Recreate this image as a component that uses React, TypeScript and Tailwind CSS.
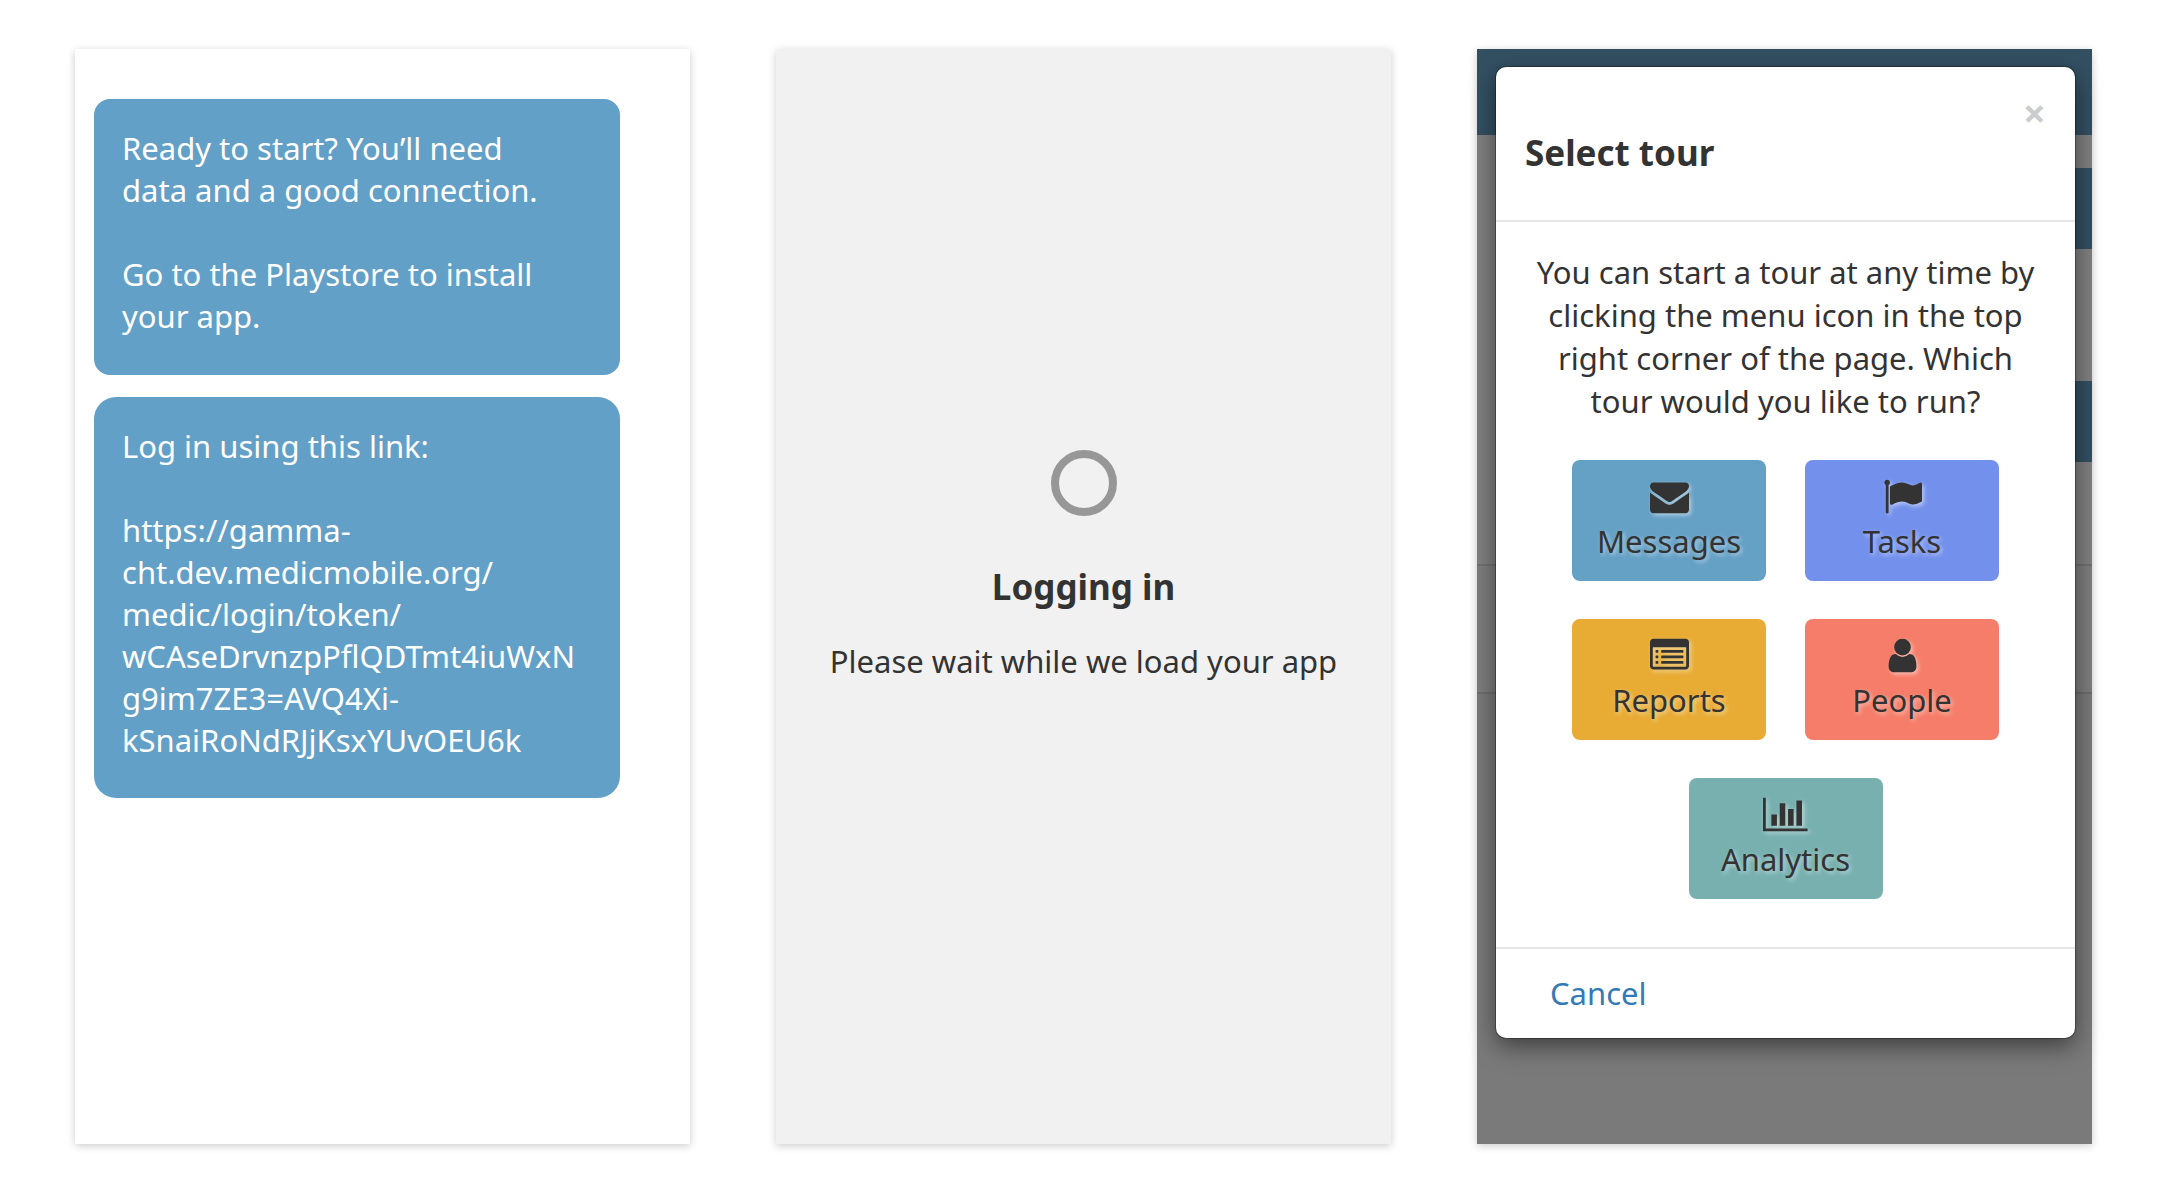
import type { ReactNode } from "react";

type IconName = "envelope" | "flag" | "list" | "user" | "chart";

const icons: Record<IconName, { width: number; path: string }> = {
  envelope: {
    width: 1792,
    path: "M1792 710v794q0 66-47 113t-113 47h-1472q-66 0-113-47t-47-113v-794q44 49 101 87 362 246 497 345 57 42 92.5 65.5t94.5 48 110 24.5h2q51 0 110-24.5t94.5-48 92.5-65.5q170-123 498-345 57-39 100-87zm0-294q0 79-49 151t-122 123q-376 261-468 325-10 7-42.5 31t-54 38.5-52 32.5-57.5 27-50 9h-2q-23 0-50-9t-57.5-27-52-32.5-54-38.5-42.5-31q-91-64-262-182.5t-205-142.5q-62-42-117-115.5t-55-136.5q0-78 41.5-130t118.5-52h1472q65 0 112.5 47t47.5 113z",
  },
  flag: {
    width: 1792,
    path: "M320 256q0 72-64 110v1266q0 13-9.5 22.5t-22.5 9.5h-64q-13 0-22.5-9.5t-9.5-22.5v-1266q-64-38-64-110 0-53 37.5-90.5t90.5-37.5 90.5 37.5 37.5 90.5zm1472 64v763q0 25-12.5 38.5t-39.5 27.5q-215 116-369 116-61 0-123.5-22t-108.5-48-115.5-48-142.5-22q-192 0-464 146-17 9-33 9-26 0-45-19t-19-45v-742q0-32 31-55 21-14 79-43 236-120 421-120 107 0 200 29t219 88q38 19 88 19 54 0 117.5-21t110-47 88-47 54.5-21q26 0 45 19t19 45z",
  },
  list: {
    width: 1792,
    path: "M384 1184v64q0 13-9.5 22.5t-22.5 9.5h-64q-13 0-22.5-9.5t-9.5-22.5v-64q0-13 9.5-22.5t22.5-9.5h64q13 0 22.5 9.5t9.5 22.5zm0-256v64q0 13-9.5 22.5t-22.5 9.5h-64q-13 0-22.5-9.5t-9.5-22.5v-64q0-13 9.5-22.5t22.5-9.5h64q13 0 22.5 9.5t9.5 22.5zm0-256v64q0 13-9.5 22.5t-22.5 9.5h-64q-13 0-22.5-9.5t-9.5-22.5v-64q0-13 9.5-22.5t22.5-9.5h64q13 0 22.5 9.5t9.5 22.5zm1152 512v64q0 13-9.5 22.5t-22.5 9.5h-960q-13 0-22.5-9.5t-9.5-22.5v-64q0-13 9.5-22.5t22.5-9.5h960q13 0 22.5 9.5t9.5 22.5zm0-256v64q0 13-9.5 22.5t-22.5 9.5h-960q-13 0-22.5-9.5t-9.5-22.5v-64q0-13 9.5-22.5t22.5-9.5h960q13 0 22.5 9.5t9.5 22.5zm0-256v64q0 13-9.5 22.5t-22.5 9.5h-960q-13 0-22.5-9.5t-9.5-22.5v-64q0-13 9.5-22.5t22.5-9.5h960q13 0 22.5 9.5t9.5 22.5zm128 704v-832q0-13-9.5-22.5t-22.5-9.5h-1472q-13 0-22.5 9.5t-9.5 22.5v832q0 13 9.5 22.5t22.5 9.5h1472q13 0 22.5-9.5t9.5-22.5zm128-1088v1088q0 66-47 113t-113 47h-1472q-66 0-113-47t-47-113v-1088q0-66 47-113t113-47h1472q66 0 113 47t47 113z",
  },
  user: {
    width: 1792,
    path: "M1536 1399q0 109-62.5 187t-150.5 78h-854q-88 0-150.5-78t-62.5-187q0-85 8.5-160.5t31.5-152 58.5-131 94-89 134.5-34.5q131 128 313 128t313-128q76 0 134.5 34.5t94 89 58.5 131 31.5 152 8.5 160.5zm-256-887q0 159-112.5 271.5t-271.5 112.5-271.5-112.5-112.5-271.5 112.5-271.5 271.5-112.5 271.5 112.5 112.5 271.5z",
  },
  chart: {
    width: 2048,
    path: "M640 896v512h-256v-512h256zm384-512v1024h-256v-1024h256zm1024 1152v128h-2048v-1536h128v1408h1920zm-640-896v768h-256v-768h256zm384-384v1152h-256v-1152h256z",
  },
};

function Icon({ name }: { name: IconName }) {
  const { width, path } = icons[name];
  return (
    <svg
      viewBox={`0 0 ${width} 1792`}
      className="h-[39px] w-auto overflow-visible fill-current drop-shadow-[2px_2px_2px_rgba(255,255,255,0.5)]"
      aria-hidden="true"
    >
      <path d={path} />
    </svg>
  );
}

function Tile({ icon, label, color }: { icon: IconName; label: string; color: string }) {
  return (
    <button
      type="button"
      className={`flex w-[194px] flex-col items-center rounded-lg pt-[17px] pb-[14px] text-[31px] leading-[51px] text-[#333] [text-shadow:2px_2px_4px_rgba(255,255,255,0.5)] ${color}`}
    >
      <Icon name={icon} />
      {label}
    </button>
  );
}

function Screen({ label, className, children }: { label: string; className: string; children: ReactNode }) {
  return (
    <section aria-label={label} className={`min-w-0 shadow-[0_2px_8px_rgba(0,0,0,0.2)] ${className}`}>
      {children}
    </section>
  );
}

function MessagesScreen() {
  return (
    <Screen label="Text messages" className="bg-white pt-[50px] pr-[70px] pl-[19px] text-[31px] text-white">
      <div className="rounded-2xl bg-[#63a0c7] px-7 pt-7 pb-[38px] leading-[42px]">
        <p>
          Ready to start? You’ll need
          <br />
          data and a good connection.
        </p>
        <p className="mt-[42px]">
          Go to the Playstore to install
          <br />
          your app.
        </p>
      </div>
      <div className="mt-[22px] rounded-[22px] bg-[#63a0c7] px-7 pt-7 pb-[37px] leading-[42px]">
        <p>Log in using this link:</p>
        <a
          href="https://gamma-cht.dev.medicmobile.org/medic/login/token/wCAseDrvnzpPflQDTmt4iuWxNg9im7ZE3=AVQ4Xi-kSnaiRoNdRJjKsxYUvOEU6k"
          className="mt-[42px] block whitespace-nowrap"
        >
          https://gamma-
          <br />
          cht.dev.medicmobile.org/
          <br />
          medic/login/token/
          <br />
          wCAseDrvnzpPflQDTmt4iuWxN
          <br />
          g9im7ZE3=AVQ4Xi-
          <br />
          kSnaiRoNdRJjKsxYUvOEU6k
        </a>
      </div>
    </Screen>
  );
}

function LoadingScreen() {
  return (
    <Screen label="Loading" className="flex flex-col items-center bg-[#f1f1f1] pt-[401px] text-center text-[#333]">
      <div role="status" aria-label="Loading" className="size-[66px] rounded-full border-8 border-[#979797]" />
      <h2 className="mt-[47px] text-[35px] leading-[48px] font-bold">Logging in</h2>
      <p className="mt-[29px] text-[31px] leading-[42px]">Please wait while we load your app</p>
    </Screen>
  );
}

function DimmedPage() {
  return (
    <div aria-hidden="true" className="col-start-1 row-start-1 flex flex-col bg-[#7a7a7a]">
      <div className="h-[86px] bg-[#335063]" />
      <div className="border-b-2 border-[#717171] bg-[#808080] pt-[33px] pb-[102px]">
        <div className="ml-auto h-[81px] w-1/2 bg-[#335063]" />
        <div className="mt-[132px] ml-auto h-[81px] w-1/2 bg-[#335063]" />
      </div>
      <div className="h-[128px] border-b-2 border-[#6e6e6e] bg-[#7e7e7e]" />
    </div>
  );
}

function TourDialog() {
  return (
    <div
      role="dialog"
      aria-labelledby="tour-title"
      className="z-10 col-start-1 row-start-1 mt-[18px] mr-[17px] ml-[19px] self-start rounded-[10px] bg-white text-[31px] text-[#333] shadow-[0_0_0_1px_rgba(0,0,0,0.3),0_8px_24px_rgba(0,0,0,0.5)]"
    >
      <header className="flex items-start justify-between border-b-2 border-[#e5e5e5] pt-[26px] pr-[29px] pb-[43px] pl-[29px]">
        <h2 id="tour-title" className="pt-9 text-[35px] leading-[48px] font-bold">
          Select tour
        </h2>
        <button type="button" aria-label="Close" className="text-[40px] leading-10 font-bold text-[#ccc]">
          ×
        </button>
      </header>
      <div className="flex flex-col items-center px-7 pt-[29px] pb-12">
        <p className="text-center leading-[43px]">
          You can start a tour at any time by
          <br />
          clicking the menu icon in the top
          <br />
          right corner of the page. Which
          <br />
          tour would you like to run?
        </p>
        <div className="mt-[37px] flex flex-wrap justify-center gap-x-[39px] gap-y-[38px]">
          <Tile icon="envelope" label="Messages" color="bg-[#65a0c5]" />
          <Tile icon="flag" label="Tasks" color="bg-[#7391ec]" />
          <Tile icon="list" label="Reports" color="bg-[#e8ac34]" />
          <Tile icon="user" label="People" color="bg-[#f57d69]" />
          <Tile icon="chart" label="Analytics" color="bg-[#78b0b0]" />
        </div>
      </div>
      <footer className="border-t-2 border-[#e5e5e5] pt-[23px] pb-[23px] pl-[54px]">
        <button type="button" className="block leading-[43px] text-[#337ab7]">
          Cancel
        </button>
      </footer>
    </div>
  );
}

export default function App() {
  return (
    <main className="grid min-h-screen grid-cols-3 gap-[86px] bg-white pt-[49px] pr-[86px] pb-14 pl-[75px] font-['Noto_Sans',sans-serif]">
      <MessagesScreen />
      <LoadingScreen />
      <Screen label="Tour selection" className="grid">
        <DimmedPage />
        <TourDialog />
      </Screen>
    </main>
  );
}
